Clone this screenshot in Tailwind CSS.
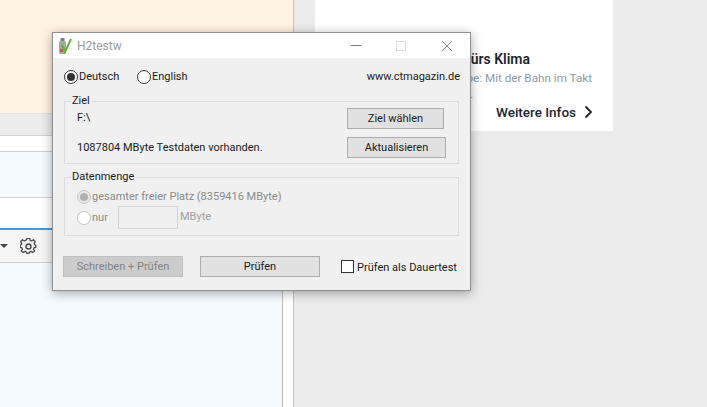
<!DOCTYPE html>
<html lang="de">
<head>
    <meta charset="UTF-8">
    <title>H2testw</title>
    <script src="https://cdn.jsdelivr.net/npm/@tailwindcss/browser@4"></script>
</head>
<body class="relative w-[707px] h-[407px] overflow-hidden flex bg-[#ebebeb] font-['Roboto',sans-serif]">

    <!-- Browser page behind: left column -->
    <div class="w-[294px] h-full flex flex-col border-r border-[#c4c4c4] shrink-0">
        <div class="h-[114px] bg-[#fff3e3] border-b border-[#e6e0d8]"></div>
        <div class="h-[22px] bg-[#ececec] border-b border-[#cfcfcf]"></div>
        <div class="h-[16px] bg-white border-b border-[#cfcfcf]"></div>
        <div class="flex-1 flex">
            <div class="w-[283px] flex flex-col border-r border-[#bdbdbd]">
                <div class="h-[46px] bg-[#f5faff] border-b border-[#d4d4d4]"></div>
                <div class="h-[30px] bg-white"></div>
                <div class="h-[2px] bg-[#3d9be0]"></div>
                <div class="h-[33px] bg-[#f5f5f5] border-b border-[#cfcfcf] flex items-center">
                    <span class="w-0 h-0 border-x-[4px] border-x-transparent border-t-[4px] border-t-[#444]"></span>
                    <svg class="ml-[12px]" width="17" height="17" viewBox="0 0 24 24" fill="none" stroke="#4a4a4a" stroke-width="2" stroke-linejoin="round">
                        <path d="M10 2h4l.6 3 2.300 1 2.600-1.700 2.800 2.800L20.600 9.700l1 2.300 1.400.3v3.400l-2.400.5-1 2.300 1.700 2.600-2.800 2.300-2.600-1.700-2.300 1-.6 2h-3.400l-.6-2-2.300-1-2.600 1.700-2.800-2.300 1.700-2.600-1-2.300-2.400-.5v-3.400l1.400-.3 1-2.300-1.700-2.600 2.800-2.800 2.600 1.700 2.300-1z" transform="translate(.6 -1.500) scale(.94)"/>
                        <circle cx="12" cy="12" r="3.500"/>
                    </svg>
                </div>
                <div class="flex-1 bg-[#f5faff]"></div>
            </div>
            <div class="flex-1 bg-white"></div>
        </div>
    </div>

    <!-- Right side with promo card -->
    <div class="flex-1 pl-[21px]">
        <div class="w-[298px] h-[131px] bg-white flex flex-col items-end pt-[50px]">
            <div class="pr-[83px] text-[14px] leading-[18px] font-semibold text-[#1c2430]">fürs Klima</div>
            <div class="pr-[21px] mt-[3px] text-[11.700px] leading-[14px] text-[#8f9aa6]">be: Mit der Bahn im Takt</div>
            <div class="pr-[140px] h-[14px] mt-[2px] text-[11.700px] leading-[14px] text-[#8f9aa6]">.</div>
            <div class="pr-[20px] mt-[2px] flex items-center gap-[8px] text-[13.500px] leading-[18px] font-medium text-[#1c2430]">
                Weitere Infos
                <svg width="9" height="14" viewBox="0 0 9 14" fill="none" stroke="#222" stroke-width="1.800"><path d="M1.500 1.500 7 7l-5.500 5.500"/></svg>
            </div>
        </div>
    </div>

    <!-- H2testw dialog over the page -->
    <div class="absolute left-[52px] top-[32px] w-[419px] h-[259px] bg-[#f0f0f0] border border-[#8f8f8f] shadow-[0_2px_10px_rgba(0,0,0,0.35)] text-[11px] leading-[16px] text-[#1a1a1a] flex flex-col">

        <!-- Title bar -->
        <div class="h-[25px] bg-white flex items-center pl-[5px] shrink-0">
            <svg width="15" height="18" viewBox="0 0 15 18">
                <rect x="1" y="4" width="7" height="13" rx="1.500" fill="#a9a9a4"/>
                <rect x="2.500" y="1" width="4" height="3" fill="#7c7c78"/>
                <rect x="2" y="12" width="3" height="3" fill="#c45a5a"/>
                <path d="M4 8l3 7 6-13" fill="none" stroke="#5cb531" stroke-width="2"/>
            </svg>
            <span class="ml-[4px] text-[12px] text-[#9b9b9b]">H2testw</span>
            <div class="ml-auto flex items-center mr-[18px]">
                <span class="w-[10px] h-px bg-[#7a7a7a]"></span>
                <span class="w-[10px] h-[10px] border border-[#dcdcdc] ml-[35px]"></span>
                <svg class="ml-[36px]" width="10" height="10" viewBox="0 0 10 10" stroke="#8a8a8a" stroke-width="1"><path d="M0 0l10 10M10 0L0 10"/></svg>
            </div>
        </div>

        <!-- Language row -->
        <div class="flex items-center h-[38px] pl-[11px] pr-[10px]">
            <span class="w-[14px] h-[14px] rounded-full border border-[#333] bg-white flex items-center justify-center"><span class="w-[8px] h-[8px] rounded-full bg-[#333]"></span></span>
            <span class="ml-[1px] w-[58px]">Deutsch</span>
            <span class="w-[14px] h-[14px] rounded-full border border-[#333] bg-white"></span>
            <span class="ml-[1px]">English</span>
            <span class="ml-auto">www.ctmagazin.de</span>
        </div>

        <!-- Ziel group -->
        <fieldset class="mx-[11px] mt-[-2px] h-[70px] border border-[#dcdcdc] flex flex-col">
            <legend class="ml-[6px] px-[1px] leading-[14px]">Ziel</legend>
            <div class="flex justify-between items-start h-[29px] pl-[12px] pr-[14px]">
                <span class="mt-[2px]">F:\</span>
                <button class="w-[97px] h-[21px] pt-[1px] bg-[#e1e1e1] border border-[#adadad] text-[11px] leading-[16px]">Ziel wählen</button>
            </div>
            <div class="flex justify-between items-center pl-[12px] pr-[12px]">
                <span class="mt-[1px]">1087804 MByte Testdaten vorhanden.</span>
                <button class="w-[99px] h-[21px] pt-[1px] bg-[#e1e1e1] border border-[#adadad] text-[11px] leading-[16px]">Aktualisieren</button>
            </div>
        </fieldset>

        <!-- Datenmenge group -->
        <fieldset class="mx-[11px] mt-[6px] h-[66px] border border-[#dcdcdc] pl-[12px] text-[#8a8a8a]">
            <legend class="ml-[-6px] px-[1px] leading-[14px] text-[#1a1a1a]">Datenmenge</legend>
            <div class="flex items-center h-[19px] mt-[3px]">
                <span class="w-[14px] h-[14px] rounded-full border border-[#c4c4c4] bg-[#e8e8e8] flex items-center justify-center"><span class="w-[8px] h-[8px] rounded-full bg-[#b0b0b0]"></span></span>
                <span class="ml-[1px]">gesamter freier Platz (8359416 MByte)</span>
            </div>
            <div class="flex items-center h-[23px]">
                <span class="w-[14px] h-[14px] rounded-full border border-[#c4c4c4] bg-white"></span>
                <span class="ml-[1px] w-[26px]">nur</span>
                <span class="w-[60px] h-[23px] border border-[#d2d2d2] bg-[#f0f0f0]"></span>
                <span class="ml-[2px] mb-[2px] text-[#9e9e9e]">MByte</span>
            </div>
        </fieldset>

        <!-- Bottom buttons -->
        <div class="flex items-center mt-[20px] pl-[10px] whitespace-nowrap">
            <button class="w-[120px] h-[21px] pt-[1px] bg-[#cccccc] border border-[#bfbfbf] text-[#838383] text-[11px] leading-[16px]">Schreiben + Prüfen</button>
            <button class="w-[120px] h-[21px] pt-[1px] ml-[17px] bg-[#e1e1e1] border border-[#adadad] text-[11px] leading-[16px]">Prüfen</button>
            <span class="w-[13px] h-[13px] ml-[21px] border border-[#333] bg-white"></span>
            <span class="ml-[3px] mt-[2px]">Prüfen als Dauertest</span>
        </div>
    </div>
</body>
</html>
